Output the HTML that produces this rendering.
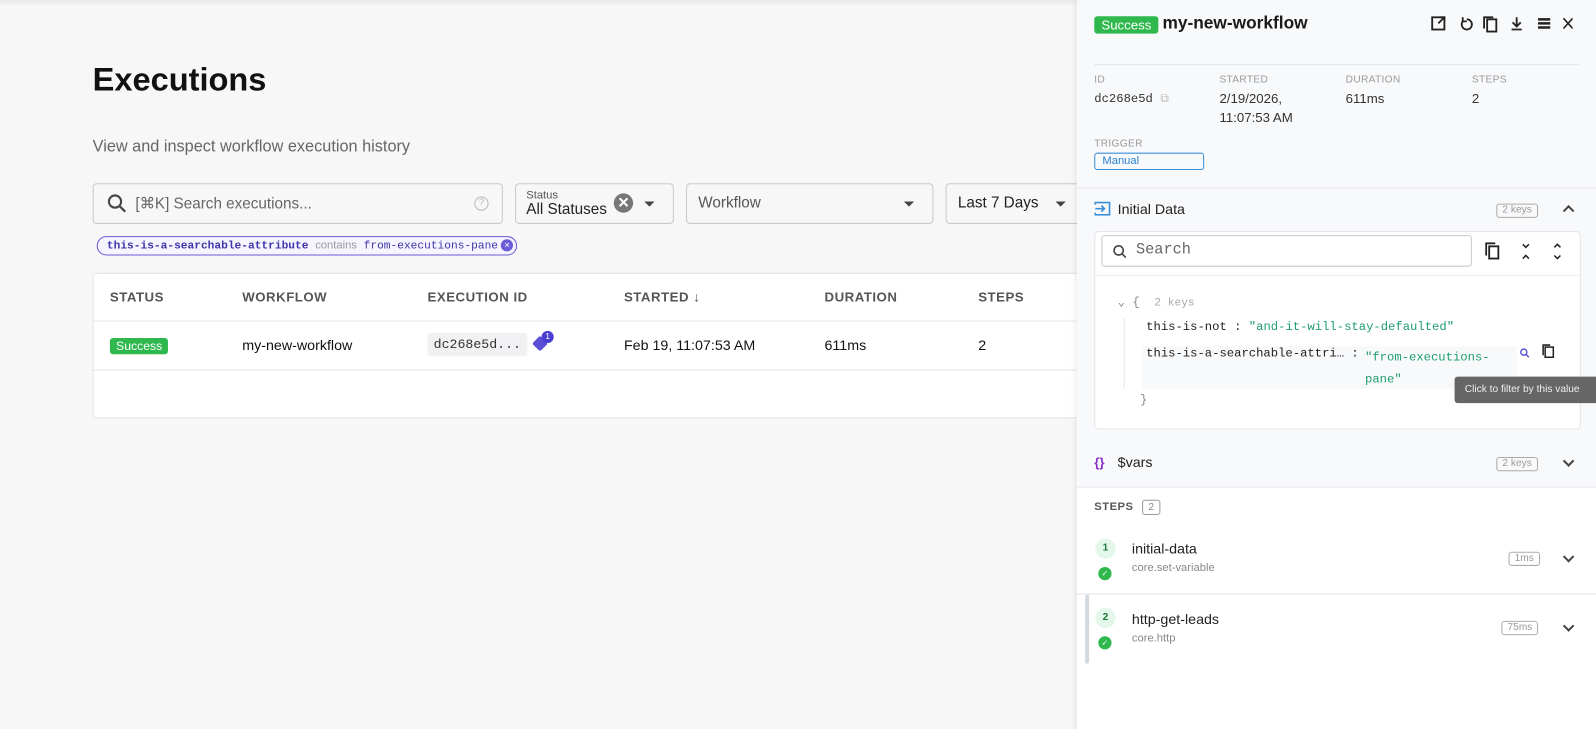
<!DOCTYPE html>
<html><head><style>
*{box-sizing:border-box;margin:0;padding:0}
html,body{width:1596px;height:729px;overflow:hidden;background:#f7f7f8}
body{font-family:"Liberation Sans",sans-serif;color:#1a1a1a;position:relative}
#wrap{position:absolute;left:0;top:0;width:1568px;height:716px;transform:scale(1.0179);transform-origin:0 0}
.mono{font-family:"Liberation Mono","DejaVu Sans Mono",monospace}
.abs{position:absolute}
.topbar{position:absolute;left:0;top:0;width:1596px;height:6px;background:linear-gradient(#e8e8ea,#f7f7f8)}
h1{position:absolute;left:91px;top:60px;font-size:32px;font-weight:bold;color:#111}
.sub{left:91px;top:136px;font-size:16px;color:#666}
.box{position:absolute;border:1px solid #c9c9cc;border-radius:4px;background:#f7f7f8}
.chip{left:95px;top:232px;height:19px;border:1.5px solid #6b5bd6;border-radius:10px;padding:0 18px 0 9px;font-size:11px;line-height:16px;color:#999;background:#f5f4ff;white-space:nowrap}
.table{left:91px;top:268px;width:980px;height:143px;background:#fff;border:1px solid #e4e4e7;border-radius:4px}
.th{position:absolute;top:284px;font-size:13px;font-weight:bold;color:#555;letter-spacing:.5px}
.td{position:absolute;top:331px;font-size:14px;color:#111}
.succ{background:#2fb84e;color:#fff;border-radius:3px;font-size:12px;padding:1px 6px}
.panel{left:1058px;top:0;width:538px;height:729px;background:#fff;box-shadow:-2px 0 6px rgba(0,0,0,.08)}
.lbl{position:absolute;font-size:10px;color:#999;letter-spacing:.3px}
.val{position:absolute;font-size:13px;color:#333;line-height:19px}
.sec{position:absolute;left:1058px;width:538px;border-top:1px solid #e4e4e7}
.keys{position:absolute;font-size:10px;color:#999;border:1px solid #aaa;border-radius:3px;padding:0 5px;line-height:12px}
.chev{position:absolute;width:8px;height:8px;border-right:2px solid #444;border-bottom:2px solid #444}
</style></head><body>
<div id="wrap">
<div class="topbar"></div>
<h1>Executions</h1>
<div class="abs sub">View and inspect workflow execution history</div>
<div class="box" style="left:91px;top:180px;width:403px;height:40px"></div>
<svg class="abs" style="left:105px;top:190px" width="20" height="20" viewBox="0 0 20 20"><circle cx="8" cy="8" r="6" fill="none" stroke="#444" stroke-width="2"/><line x1="12.5" y1="12.5" x2="18" y2="18" stroke="#444" stroke-width="2.2"/></svg>
<div class="abs" style="left:133px;top:191px;font-size:15px;color:#666">[⌘K] Search executions...</div>
<div class="abs" style="left:466px;top:193px;width:14px;height:14px;border:1.3px solid #bbb;border-radius:50%;font-size:10px;color:#bbb;text-align:center;line-height:12px">?</div>
<div class="box" style="left:506px;top:180px;width:156px;height:40px"></div>
<div class="abs" style="left:517px;top:186px;font-size:11px;color:#555">Status</div>
<div class="abs" style="left:517px;top:197px;font-size:15px;color:#222">All Statuses</div>
<div class="abs" style="left:603px;top:190px;width:19px;height:19px;border-radius:50%;background:#777;color:#fff;font-size:14px;text-align:center;line-height:19px;font-weight:bold">✕</div>
<div class="abs" style="left:633px;top:198px;border:5px solid transparent;border-top-color:#444"></div>
<div class="box" style="left:674px;top:180px;width:243px;height:40px"></div>
<div class="abs" style="left:686px;top:191px;font-size:15px;color:#555">Workflow</div>
<div class="abs" style="left:888px;top:198px;border:5px solid transparent;border-top-color:#444"></div>
<div class="box" style="left:929px;top:180px;width:135px;height:40px"></div>
<div class="abs" style="left:941px;top:191px;font-size:15px;color:#222">Last 7 Days</div>
<div class="abs" style="left:1037px;top:198px;border:5px solid transparent;border-top-color:#444"></div>
<div class="abs chip mono"><b style="color:#3f35a8">this-is-a-searchable-attribute</b> <span style="font-family:'Liberation Sans',sans-serif">contains</span> <span style="color:#3f35a8">from-executions-pane</span><span style="position:absolute;right:3px;top:2px;width:12px;height:12px;border-radius:50%;background:#6b5bd6;color:#fff;font-size:9px;line-height:12px;text-align:center">✕</span></div>
<div class="abs table"></div>
<div class="abs" style="left:92px;top:315px;width:978px;border-top:1px solid #e4e4e7"></div>
<div class="abs" style="left:92px;top:363px;width:978px;border-top:1px solid #e4e4e7"></div>
<div class="th" style="left:108px">STATUS</div><div class="th" style="left:238px">WORKFLOW</div><div class="th" style="left:420px">EXECUTION ID</div><div class="th" style="left:613px">STARTED ↓</div><div class="th" style="left:810px">DURATION</div><div class="th" style="left:961px">STEPS</div>
<div class="td" style="left:108px;top:331px"><span class="succ">Success</span></div>
<div class="td" style="left:238px">my-new-workflow</div>
<div class="td mono" style="left:420px;top:327px;background:#f1f1f3;border-radius:3px;padding:4px 6px;font-size:13px;color:#333">dc268e5d...</div>
<div class="abs" style="left:525px;top:332px;width:11px;height:11px;background:#5b4fd6;transform:rotate(45deg);border-radius:2px"></div>
<div class="abs" style="left:532px;top:325px;width:12px;height:12px;border-radius:50%;background:#4a3fd0;color:#fff;font-size:8px;text-align:center;line-height:12px">1</div>
<div class="td" style="left:613px">Feb 19, 11:07:53 AM</div>
<div class="td" style="left:810px">611ms</div>
<div class="td" style="left:961px">2</div>

<div class="abs panel"></div>
<div class="abs" style="left:1058px;top:0;width:538px;height:184px;background:#f8f9fb"></div>
<div class="abs" style="left:1075px;top:16px;background:#2fb84e;color:#fff;border-radius:3px;font-size:13px;padding:1px 7px">Success</div>
<div class="abs" style="left:1142px;top:13px;font-size:17px;font-weight:bold">my-new-workflow</div>
<svg class="abs" style="left:1405px;top:14px" width="140" height="20" viewBox="0 0 140 20" fill="none" stroke="#222" stroke-width="1.8">
<rect x="2" y="3" width="12" height="12"/><path d="M8 9l6-6M10 3h4v4"/>
<path d="M36 5a5 5 0 1 1-4 2M32 3v4h4"/>
<rect x="56" y="5" width="9" height="12"/><path d="M53 14V3h9"/>
<path d="M85 3v9M81 8l4 4 4-4M80 15h10" />
<path d="M106 5h12M106 9h12M106 13h12" stroke-width="2.5"/>
<path d="M131 4l9 10M140 4l-9 10" stroke-width="1.6"/>
</svg>
<div class="abs" style="left:1075px;top:63px;width:477px;border-top:1px solid #e4e4e7"></div>
<div class="lbl" style="left:1075px;top:73px">ID</div><div class="lbl" style="left:1198px;top:73px">STARTED</div><div class="lbl" style="left:1322px;top:73px">DURATION</div><div class="lbl" style="left:1446px;top:73px">STEPS</div>
<div class="val mono" style="left:1075px;top:88px;font-size:12px">dc268e5d <span style="color:#bbb">⧉</span></div>
<div class="val" style="left:1198px;top:87px">2/19/2026,<br>11:07:53 AM</div>
<div class="val" style="left:1322px;top:87px">611ms</div>
<div class="val" style="left:1446px;top:87px">2</div>
<div class="lbl" style="left:1075px;top:136px">TRIGGER</div>
<div class="abs" style="left:1075px;top:150px;width:108px;height:17px;border:1.3px solid #3a8fd8;border-radius:3px;font-size:11px;color:#2a80d0;padding-left:7px;line-height:15px">Manual</div>
<div class="sec" style="top:184px;height:294px;background:#f8f9fb"></div>
<svg class="abs" style="left:1075px;top:198px" width="16" height="14" viewBox="0 0 16 14" fill="none" stroke="#3a8fd8" stroke-width="1.6"><path d="M1 3V1h14v12H1v-2M1 7h9M7 4l3 3-3 3"/></svg>
<div class="abs" style="left:1098px;top:197px;font-size:14px;color:#222">Initial Data</div>
<div class="keys" style="left:1470px;top:200px">2 keys</div>
<div class="chev" style="left:1537px;top:203px;transform:rotate(-135deg)"></div>
<div class="abs" style="left:1075px;top:227px;width:478px;height:195px;background:#fff;border:1px solid #e4e4e7;border-radius:4px"></div>
<div class="abs" style="left:1076px;top:270px;width:476px;border-top:1px solid #eee"></div>
<div class="abs" style="left:1082px;top:231px;width:364px;height:31px;border:1px solid #c9c9cc;border-radius:3px"></div>
<svg class="abs" style="left:1093px;top:240px" width="14" height="14" viewBox="0 0 14 14" fill="none" stroke="#444" stroke-width="1.6"><circle cx="6" cy="6" r="4.5"/><path d="M9.5 9.5L13 13"/></svg>
<div class="abs mono" style="left:1116px;top:237px;font-size:15px;color:#666">Search</div>
<svg class="abs" style="left:1459px;top:238px" width="80" height="18" viewBox="0 0 80 18" fill="none" stroke="#222" stroke-width="1.8"><rect x="4" y="4" width="9" height="12"/><path d="M1 13V1h9"/><path d="M37 2l3 3 3-3M37 16l3-3 3 3" stroke-width="1.5"/><path d="M68 5l3-3 3 3M68 13l3 3 3-3" stroke-width="1.5"/></svg>
<div class="abs mono" style="left:1098px;top:289px;font-size:12px;color:#888">⌄ {&nbsp; <span style="color:#aaa;font-size:11px">2 keys</span></div>
<div class="abs" style="left:1104px;top:312px;height:70px;border-left:1px solid #e4e4e7"></div>
<div class="abs mono" style="left:1126px;top:314px;font-size:12px;color:#222">this-is-not : <span style="color:#1f9e6e">"and-it-will-stay-defaulted"</span></div>
<div class="abs" style="left:1122px;top:340px;width:368px;height:42px;background:#f8f9fb"></div>
<div class="abs mono" style="left:1126px;top:340px;font-size:12px;color:#222">this-is-a-searchable-attri… :</div>
<div class="abs mono" style="left:1341px;top:340px;font-size:12px;color:#1f9e6e;line-height:22px">"from-executions-<br>pane"</div>
<svg class="abs" style="left:1493px;top:342px" width="10" height="10" viewBox="0 0 10 10" fill="none" stroke="#5b4fd6" stroke-width="1.4"><circle cx="4" cy="4" r="3"/><path d="M6.3 6.3L9 9"/></svg>
<svg class="abs" style="left:1514px;top:338px" width="14" height="14" viewBox="0 0 14 14" fill="none" stroke="#222" stroke-width="1.5"><rect x="4" y="3" width="8" height="10"/><path d="M2 11V1h7"/></svg>
<div class="abs mono" style="left:1120px;top:386px;font-size:12px;color:#888">}</div>
<div class="abs" style="left:1429px;top:370px;width:167px;height:26px;background:#666;border-radius:3px;color:#eee;font-size:10px;line-height:26px;padding-left:10px">Click to filter by this value</div>
<div class="abs" style="left:1075px;top:447px;font-size:13px;color:#8a2fc7;font-weight:bold">{}</div>
<div class="abs" style="left:1098px;top:446px;font-size:14px;color:#222">$vars</div>
<div class="keys" style="left:1470px;top:449px">2 keys</div>
<div class="chev" style="left:1537px;top:449px;transform:rotate(45deg)"></div>
<div class="sec" style="top:478px"></div>
<div class="abs" style="left:1075px;top:492px;font-size:11px;color:#555;letter-spacing:.5px;font-weight:bold">STEPS</div>
<div class="abs" style="left:1122px;top:491px;width:18px;height:15px;border:1px solid #999;border-radius:3px;font-size:10px;color:#888;text-align:center;line-height:13px">2</div>
<div class="abs" style="left:1076px;top:529px;width:20px;height:20px;border-radius:50%;background:#e3f8ea;font-size:10px;color:#1a7a3a;text-align:center;line-height:20px;font-weight:bold">1</div>
<div class="abs" style="left:1079px;top:557px;width:13px;height:13px;border-radius:50%;background:#2fb84e;color:#fff;font-size:8px;text-align:center;line-height:13px">✓</div>
<div class="abs" style="left:1112px;top:531px;font-size:14px;color:#222">initial-data</div>
<div class="abs" style="left:1112px;top:552px;font-size:11px;color:#888">core.set-variable</div>
<div class="keys" style="left:1482px;top:542px">1ms</div>
<div class="chev" style="left:1537px;top:543px;transform:rotate(45deg)"></div>
<div class="sec" style="top:583px"></div>
<div class="abs" style="left:1066px;top:584px;width:4px;height:68px;background:#d4dae2;border-radius:2px"></div>
<div class="abs" style="left:1076px;top:597px;width:20px;height:20px;border-radius:50%;background:#e3f8ea;font-size:10px;color:#1a7a3a;text-align:center;line-height:20px;font-weight:bold">2</div>
<div class="abs" style="left:1079px;top:625px;width:13px;height:13px;border-radius:50%;background:#2fb84e;color:#fff;font-size:8px;text-align:center;line-height:13px">✓</div>
<div class="abs" style="left:1112px;top:600px;font-size:14px;color:#222">http-get-leads</div>
<div class="abs" style="left:1112px;top:621px;font-size:11px;color:#888">core.http</div>
<div class="keys" style="left:1475px;top:610px">75ms</div>
<div class="chev" style="left:1537px;top:611px;transform:rotate(45deg)"></div>
</div>
</body></html>
